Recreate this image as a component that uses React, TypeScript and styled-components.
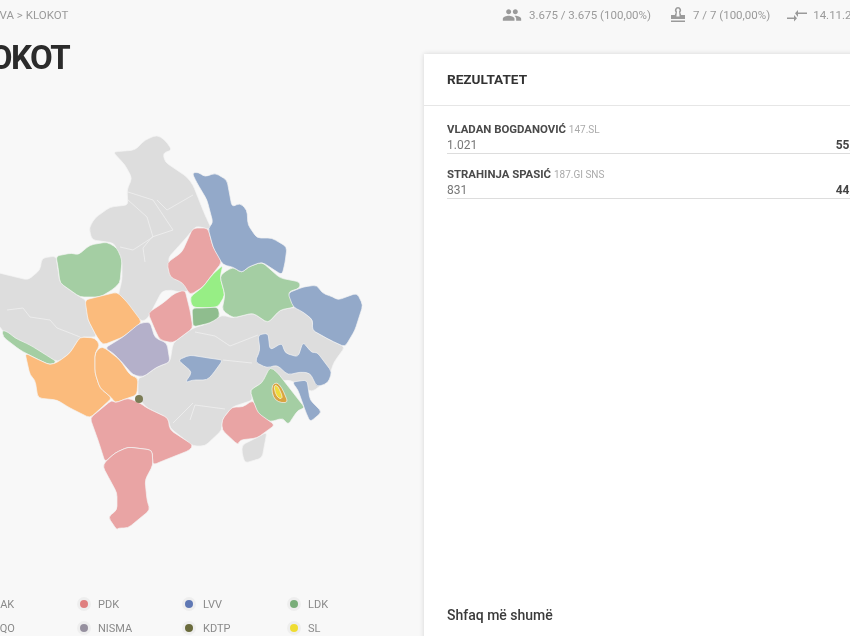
import React from 'react';
import styled, {createGlobalStyle} from 'styled-components';
import {MdPeople} from 'react-icons/md';

const colors = {
    grey: '#dddddd',
    ldk: '#a4cea3',
    ldkDark: '#8fbd8e',
    bright: '#97ee85',
    sl: '#f0dc3c',
    orange: '#fbbb7c',
    orangeDark: '#d9a441',
    pdk: '#e9a4a4',
    lvv: '#93a9c9',
    nisma: '#b4b0ca',
    kotp: '#7b7c55',
};

const regions: {fill: string; points: string}[] = [
    {fill: colors.grey, points: '157,135 165,140 172,150 163,153 165,162 187,177 193,185 205,215 212,230 196,226 186,238 168,258 172,272 184,283 190,291 178,292 172,290 162,291 148,318 142,322 118,296 122,280 122,262 114,243 100,241 92,240 89,228 95,218 110,207 128,205 127,190 132,178 125,165 113,152 135,150 145,140'},
    {fill: colors.grey, points: '-5,272 28,280 40,270 42,258 56,256 60,283 80,297 86,300 88,320 97,337 80,337 70,353 58,362 50,358 20,348 2,330 -5,320'},
    {fill: colors.grey, points: '173,343 193,328 210,323 222,315 233,318 253,313 268,323 280,310 295,307 303,312 313,320 312,330 330,340 345,347 334,362 328,380 312,392 290,380 262,383 250,390 253,400 232,407 222,420 222,430 205,446 193,446 170,428 168,418 147,408 138,398 138,378 143,377 157,367 170,362'},
    {fill: colors.grey, points: '242,445 258,437 267,432 262,458 245,463 242,453'},
    {fill: colors.ldk, points: '56,256 72,253 78,255 90,245 107,242 117,248 122,260 120,283 112,290 100,297 80,297 60,283 58,267'},
    {fill: colors.ldk, points: '2,330 8,332 15,338 30,345 43,353 57,362 50,365 35,358 20,350 3,337'},
    {fill: colors.orange, points: '85,300 117,292 127,302 142,322 123,337 103,345 97,337 88,320'},
    {fill: colors.orange, points: '25,353 35,358 50,365 58,362 70,353 80,337 95,338 100,345 95,353 95,373 100,388 112,398 90,418 70,408 57,400 38,398 35,380 30,375'},
    {fill: colors.orange, points: '100,347 105,348 120,360 130,375 138,378 137,395 128,398 115,403 112,398 100,388 95,373 95,353'},
    {fill: colors.nisma, points: '105,348 123,337 140,323 150,322 155,338 167,343 170,362 157,367 143,377 133,375 120,360 113,353'},
    {fill: colors.pdk, points: '148,313 163,303 175,293 185,290 190,310 193,328 173,343 160,340 155,330'},
    {fill: colors.pdk, points: '167,263 182,252 193,228 208,228 213,247 222,262 212,275 203,287 190,295 183,283 170,277'},
    {fill: colors.bright, points: '223,265 212,275 203,287 190,297 192,307 203,308 218,307 225,295 220,277'},
    {fill: colors.ldkDark, points: '192,308 193,327 210,323 220,317 218,307 203,308'},
    {fill: colors.ldk, points: '223,273 233,267 242,273 248,267 262,262 280,278 300,282 300,288 288,292 295,307 280,310 268,323 253,313 233,318 222,310 225,295 220,277'},
    {fill: colors.lvv, points: '192,173 198,172 205,177 215,173 227,180 232,207 240,203 247,210 248,225 257,238 272,238 287,247 285,263 282,275 262,262 248,267 242,273 233,267 223,265 213,247 208,228 213,223 207,200 197,183'},
    {fill: colors.lvv, points: '288,293 303,287 317,285 322,293 333,297 338,300 357,293 363,305 355,330 345,347 330,340 312,330 313,320 303,312 293,307'},
    {fill: colors.lvv, points: '258,335 268,333 270,350 282,343 285,353 298,357 303,342 312,353 317,352 332,372 328,383 317,387 310,373 300,372 288,375 277,365 267,368 255,362 260,350'},
    {fill: colors.lvv, points: '292,382 307,380 310,400 322,412 310,422 305,410 298,390'},
    {fill: colors.lvv, points: '178,360 190,355 208,358 223,360 212,375 207,380 192,380 185,383 192,372'},
    {fill: colors.ldk, points: '270,367 277,372 305,408 298,410 288,425 283,418 270,422 257,413 253,400 250,390 262,383'},
    {fill: colors.orangeDark, points: '272,385 277,382 282,388 288,402 282,403 275,400 272,393'},
    {fill: colors.sl, points: '274,385 278,386 283,398 279,399 275,393'},
    {fill: colors.pdk, points: '253,400 258,413 275,425 257,438 240,440 238,445 222,430 222,420 232,407 243,407'},
    {fill: colors.pdk, points: '90,418 112,400 115,403 128,398 140,403 147,408 168,418 170,430 193,445 190,450 160,462 153,465 152,450 128,447 115,453 105,462 98,440'},
    {fill: colors.pdk, points: '105,462 115,453 128,447 152,450 153,465 145,480 147,500 150,510 128,528 118,528 117,530 108,517 117,510 117,493 110,480 103,467'},
];

const borders = [
    '128,192 153,200 173,230 152,237 143,248 145,262',
    '157,200 167,210 193,195',
    '128,200 147,217 153,237 133,250 120,247',
    '7,310 23,308 30,317 50,320 57,328 70,333 80,337',
    '193,403 173,423',
    '225,409 195,405 190,420',
    '223,360 252,363',
    '195,332 215,336 230,346 258,335',
];

// rounds each polygon corner so the outlines look less faceted
const roundedPath = (points: string, radius = 4) => {
    const pts = points.split(' ').map((p) => p.split(',').map(Number));
    const towards = (a: number[], b: number[]) => {
        const length = Math.hypot(b[0] - a[0], b[1] - a[1]);
        const t = Math.min(radius, length / 2) / length;
        return `${(a[0] + (b[0] - a[0]) * t).toFixed(1)} ${(a[1] + (b[1] - a[1]) * t).toFixed(1)}`;
    };
    return pts.map((p, i) => {
        const prev = pts[(i + pts.length - 1) % pts.length];
        const next = pts[(i + 1) % pts.length];
        return `${i === 0 ? 'M' : 'L'}${towards(p, prev)} Q${p[0]} ${p[1]} ${towards(p, next)}`;
    }).join(' ') + ' Z';
};

const legend = [
    {label: 'AAK', color: '#f2a65a'}, {label: 'PDK', color: '#df7f7f'}, {label: 'LVV', color: '#5f78b4'}, {label: 'LDK', color: '#79ad79'},
    {label: 'KQO', color: '#999999'}, {label: 'NISMA', color: '#96909f'}, {label: 'KDTP', color: '#6a6b3c'}, {label: 'SL', color: '#efdc32'},
];

const candidates = [
    {name: 'VLADAN BOGDANOVIĆ', party: '147.SL', votes: '1.021', percent: '55,13%'},
    {name: 'STRAHINJA SPASIĆ', party: '187.GI SNS', votes: '831', percent: '44,87%'},
];

const App: React.FC = () => (
    <Viewport>
        <GlobalStyle />
        <Page>
            <TopBar>
                <Crumbs>KOSOVA &gt; KLOKOT</Crumbs>
                <Stats>
                    <Stat>
                        <MdPeople size={20} />
                        <span>3.675 / 3.675 (100,00%)</span>
                    </Stat>
                    <Stat>
                        <svg width="16" height="18" viewBox="0 0 16 18" fill="currentColor">
                            <path d="M8 1a3.2 3.2 0 0 1 2.3 5.4L11.2 9H15v4H1V9h3.8l.9-2.6A3.2 3.2 0 0 1 8 1zm0 1.6a1.6 1.6 0 0 0-1 2.8L6.4 10.4h3.2L9 5.4a1.6 1.6 0 0 0-1-2.8zM1 14.5h14V16H1z" />
                        </svg>
                        <span>7 / 7 (100,00%)</span>
                    </Stat>
                    <Spaced>
                        <svg width="20" height="18" viewBox="0 0 20 18" fill="currentColor">
                            <path d="M11 6.5h9V8h-9v3L8 7.3 11 4zM0 11.5h7V9l3 3.2-3 3.2V13H0z" />
                        </svg>
                        <span>14.11.2021 19:00</span>
                    </Spaced>
                </Stats>
            </TopBar>
            <Main>
                <LeftColumn>
                    <Title>KLOKOT</Title>
                    <MapSvg viewBox="0 130 370 405">
                        {regions.map((region, index) =>
                            <path key={index} d={roundedPath(region.points)} fill={region.fill} stroke="#f4f4f4" strokeWidth="0.7" />
                        )}
                        {borders.map((line, index) =>
                            <polyline key={index} points={line} fill="none" stroke="#ededed" strokeWidth="0.9" />
                        )}
                        <circle cx="139" cy="399" r="4" fill={colors.kotp} />
                    </MapSvg>
                    <Legend>
                        {legend.map((item) =>
                            <LegendItem key={item.label}>
                                <Dot color={item.color} />
                                {item.label}
                            </LegendItem>
                        )}
                    </Legend>
                </LeftColumn>
                <Card>
                    <CardHeader>REZULTATET</CardHeader>
                    <CardBody>
                        {candidates.map((candidate) =>
                            <Candidate key={candidate.name}>
                                <CandidateName>{candidate.name} <Party>{candidate.party}</Party></CandidateName>
                                <CandidateNumbers>
                                    <span>{candidate.votes}</span>
                                    <Percent>{candidate.percent}</Percent>
                                </CandidateNumbers>
                            </Candidate>
                        )}
                    </CardBody>
                    <ShowMore>Shfaq më shumë</ShowMore>
                </Card>
            </Main>
        </Page>
    </Viewport>
);

const GlobalStyle = createGlobalStyle`
    html, body {
        margin: 0;
        background: #f8f8f8;
        overflow: hidden;
    }
`;
const Viewport = styled.div`
    width: 850px;
    height: 636px;
    overflow: hidden;
    background: #f8f8f8;
    font-family: Roboto, "Liberation Sans", sans-serif;
`;
const Page = styled.div`
    width: 930px;
    height: 636px;
    margin-left: -30px;
    filter: blur(0.35px);
`;
const TopBar = styled.div`
    display: flex;
    justify-content: space-between;
    align-items: center;
    height: 30px;
    font-size: 11.5px;
    color: #9a9a9a;
`;
const Crumbs = styled.div`
    font-size: 11.5px;
`;
const Stats = styled.div`
    display: flex;
    gap: 19px;
    width: 398px;
`;
const Stat = styled.div`
    display: flex;
    align-items: center;
    gap: 7px;
    white-space: nowrap;
`;
const Spaced = styled(Stat)`
    gap: 6px;
    margin-left: -2px;
`;
const Main = styled.div`
    display: flex;
`;
const LeftColumn = styled.div`
    width: 454px;
    flex-shrink: 0;
`;
const Title = styled.h1`
    margin: 10px 0 0 -15px;
    font-size: 33px;
    line-height: 36px;
    font-weight: 700;
    letter-spacing: -1.5px;
    color: #2b2b2b;
`;
const MapSvg = styled.svg`
    display: block;
    width: 370px;
    height: 405px;
    margin: 54px 0 0 30px;
    overflow: visible;
    filter: blur(0.4px);
`;
const Legend = styled.div`
    display: grid;
    grid-template-columns: repeat(4, 105px);
    grid-auto-rows: 24px;
    margin: 57px 0 0 3px;
`;
const LegendItem = styled.div`
    display: flex;
    align-items: center;
    gap: 10px;
    font-size: 11px;
    color: #8a8a8a;
`;
const Dot = styled.span<{ color: string }>`
    width: 8px;
    height: 8px;
    margin-left: 2px;
    border-radius: 50%;
    background: ${(props) => props.color};
    box-shadow: 0 0 0 3px rgba(0, 0, 0, 0.04);
`;
const Card = styled.section`
    display: flex;
    flex-direction: column;
    width: 476px;
    height: 600px;
    margin-top: 24px;
    background: #ffffff;
    box-shadow: 0 0 5px rgba(0, 0, 0, 0.14);
`;
const CardHeader = styled.div`
    height: 51px;
    padding-left: 23px;
    line-height: 50px;
    font-size: 13.6px;
    font-weight: 700;
    color: #333333;
    border-bottom: 1px solid #e6e6e6;
`;
const CardBody = styled.div`
    display: flex;
    flex-direction: column;
    flex: 1;
    gap: 12px;
    padding: 15px 25px 0 23px;
`;
const Candidate = styled.div`
    border-bottom: 1px solid #dddddd;
`;
const CandidateName = styled.div`
    font-size: 11.4px;
    line-height: 17px;
    font-weight: 700;
    color: #4a4a4a;
`;
const Party = styled.span`
    font-size: 10px;
    font-weight: 400;
    color: #aaaaaa;
`;
const CandidateNumbers = styled.div`
    display: flex;
    justify-content: space-between;
    font-size: 12px;
    line-height: 15px;
    color: #777777;
`;
const Percent = styled.span`
    font-weight: 700;
    color: #444444;
`;
const ShowMore = styled.div`
    padding: 0 23px 30px;
    font-size: 14px;
    line-height: 17px;
    font-weight: 500;
    color: #3a3a3a;
`;

export default App;
